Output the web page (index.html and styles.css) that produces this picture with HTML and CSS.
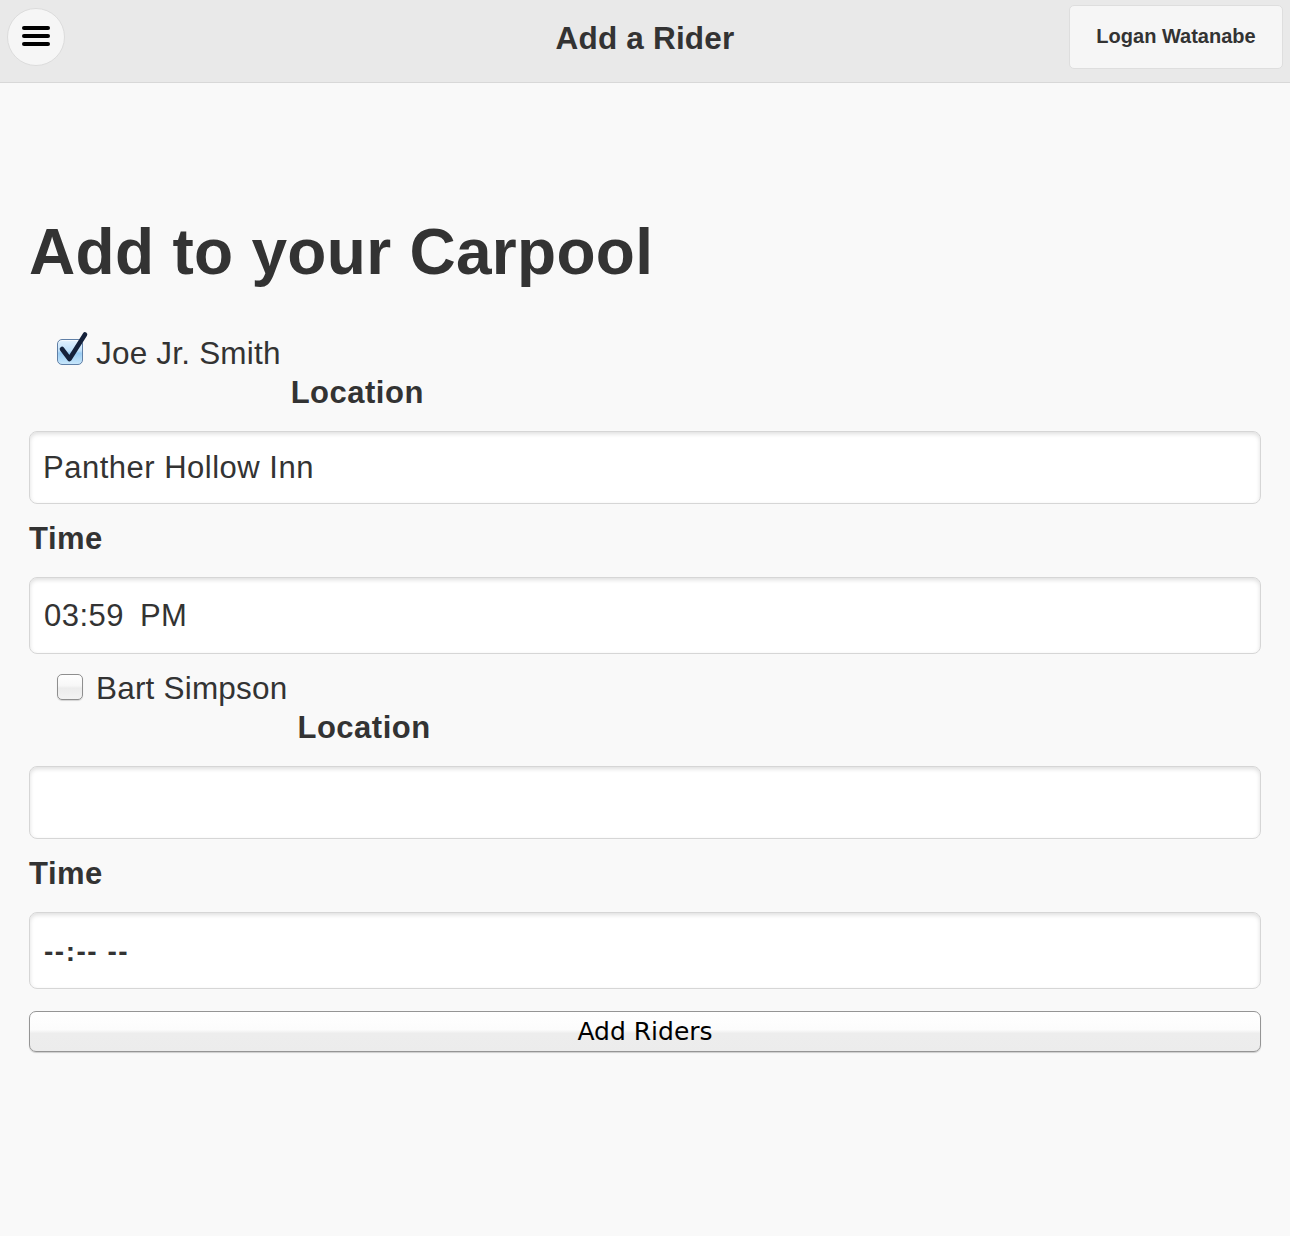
FILE: index.html
```html
<!DOCTYPE html>
<html lang="en">
<head>
<meta charset="utf-8">
<title>Add a Rider</title>
<link rel="stylesheet" href="styles.css">
</head>
<body>
<header class="topbar">
  <div class="topbar-left">
    <button class="menu-btn" type="button" aria-label="Menu">
      <svg width="28" height="20" viewBox="0 0 28 20" aria-hidden="true">
        <line x1="2" y1="2" x2="26" y2="2" stroke="#000" stroke-width="4" stroke-linecap="round"/>
        <line x1="2" y1="10" x2="26" y2="10" stroke="#000" stroke-width="4" stroke-linecap="round"/>
        <line x1="2" y1="18" x2="26" y2="18" stroke="#000" stroke-width="4" stroke-linecap="round"/>
      </svg>
    </button>
  </div>
  <h2 class="topbar-title">Add a Rider</h2>
  <div class="topbar-right">
    <button class="user-btn" type="button">Logan Watanabe</button>
  </div>
</header>

<main class="content">
  <h1 class="page-title">Add to your Carpool</h1>
  <form class="rider-form">
    <section class="rider rider-first">
      <div class="rider-head">
        <label class="rider-name">
          <span class="check-wrap">
            <input class="check check-on" type="checkbox" checked>
            <svg class="check-mark" width="34" height="34" viewBox="0 0 34 34" aria-hidden="true">
              <path d="M5 18 L12.5 28 L28 3.5" fill="none" stroke="#14213a" stroke-width="4.6" stroke-linecap="round" stroke-linejoin="round"/>
            </svg>
          </span>
          <span>Joe Jr. Smith</span>
        </label>
        <label class="field-label loc-label">Location</label>
      </div>
      <input class="field field-loc" type="text" value="Panther Hollow Inn">
      <label class="field-label time-label">Time</label>
      <input class="field field-time" type="text" value="03:59&#8201; PM">
    </section>

    <section class="rider rider-second">
      <div class="rider-head">
        <label class="rider-name">
          <span class="check-wrap">
            <input class="check check-off" type="checkbox">
          </span>
          <span>Bart Simpson</span>
        </label>
        <label class="field-label loc-label">Location</label>
      </div>
      <input class="field field-loc" type="text" value="">
      <label class="field-label time-label">Time</label>
      <input class="field field-time field-empty" type="text" placeholder="--:-- --">
    </section>

    <button class="submit-btn" type="button">Add Riders</button>
  </form>
</main>
</body>
</html>
```

FILE: styles.css
```css
* {
  box-sizing: border-box;
}

html, body {
  margin: 0;
  padding: 0;
}

body {
  background: #f9f9f9;
  color: #333;
  font-family: "Liberation Sans", Arial, Helvetica, sans-serif;
  width: 1290px;
  min-height: 1236px;
}

/* Header */
.topbar {
  height: 83px;
  background: #e9e9e9;
  border-bottom: 1px solid #d8d8d8;
  display: grid;
  grid-template-columns: 1fr auto 1fr;
  align-items: center;
}

.topbar-left {
  display: flex;
  align-items: center;
  padding-left: 7px;
  padding-top: 12px;
  padding-bottom: 8px;
}

.menu-btn {
  width: 58px;
  height: 58px;
  border-radius: 50%;
  background: #f6f6f6;
  border: 1px solid #dcdcdc;
  display: flex;
  align-items: center;
  justify-content: center;
  padding: 0;
  margin-top: -12px;
}

.menu-btn svg {
  display: block;
  margin-top: -2px;
}

.topbar-title {
  margin: 0;
  font-size: 31.5px;
  font-weight: bold;
  color: #333;
  line-height: 36px;
  margin-top: -6px;
  text-align: center;
  letter-spacing: 0.2px;
}

.topbar-right {
  display: flex;
  justify-content: flex-end;
  padding-right: 7px;
}

.user-btn {
  width: 214px;
  height: 64px;
  margin-top: -9px;
  background: #f6f6f6;
  border: 1px solid #dedede;
  border-radius: 5px;
  font-family: "Liberation Sans", Arial, sans-serif;
  font-size: 20px;
  font-weight: bold;
  color: #333;
  padding: 0;
}

/* Content */
.content {
  padding: 0 29px;
}

.page-title {
  margin: 131px 0 0;
  font-size: 64px;
  line-height: 76px;
  font-weight: bold;
  color: #333;
  letter-spacing: 0.3px;
}

.rider-form {
  display: flex;
  flex-direction: column;
}

.rider {
  display: flex;
  flex-direction: column;
}

.rider-first {
  margin-top: 45px;
}

.rider-second {
  margin-top: 16px;
}

.rider-head {
  display: grid;
  grid-template-columns: auto 1fr;
  column-gap: 10px;
  row-gap: 4px;
  padding-left: 28px;
}

.rider-name {
  grid-column: 1;
  grid-row: 1;
  display: flex;
  align-items: center;
  font-size: 31.5px;
  line-height: 36px;
  color: #333;
  letter-spacing: 0.2px;
}

.loc-label {
  grid-column: 2;
  grid-row: 2;
}

.check-wrap {
  position: relative;
  width: 26px;
  height: 26px;
  margin-right: 13px;
  margin-top: -2px;
  flex: none;
}

.check {
  appearance: none;
  -webkit-appearance: none;
  display: block;
  margin: 0;
  width: 26px;
  height: 26px;
  border-radius: 5px;
}

.check-on {
  border: 1px solid #5f7fa6;
  background: linear-gradient(#e3f1fd 0%, #bfe0fa 45%, #98cbf3 55%, #c7e6fb 100%);
  box-shadow: inset 0 1px 1px rgba(255, 255, 255, 0.8);
}

.check-off {
  border: 1px solid #8f8f8f;
  background: linear-gradient(#ffffff 0%, #f7f7f7 45%, #ececec 55%, #f3f3f3 100%);
  box-shadow: 0 1px 1px rgba(0, 0, 0, 0.15);
}

.check-mark {
  position: absolute;
  left: 0;
  top: -8px;
  pointer-events: none;
}

.field-label {
  display: block;
  font-size: 31px;
  line-height: 36px;
  font-weight: bold;
  color: #333;
  letter-spacing: 0.5px;
}

.time-label {
  margin-top: 17px;
}

.field {
  display: block;
  width: 100%;
  margin: 0;
  background: #fff;
  border: 1px solid #d6d6d6;
  border-radius: 8px;
  box-shadow: inset 0 2px 4px rgba(0, 0, 0, 0.13);
  font-family: "Liberation Sans", Arial, sans-serif;
  font-size: 31px;
  letter-spacing: 0.5px;
  color: #333;
  padding: 0 13px;
  outline: none;
}

.field-loc {
  height: 73px;
  margin-top: 20px;
}

.field-time {
  height: 77px;
  margin-top: 20px;
  padding-left: 14px;
}

.field-empty::placeholder {
  color: #333;
  font-size: 28px;
  font-weight: bold;
  letter-spacing: 1.5px;
  opacity: 1;
}

.submit-btn {
  margin-top: 22px;
  height: 41px;
  width: 100%;
  border: 1px solid #959595;
  border-radius: 7px;
  background: linear-gradient(#ffffff 0%, #fcfcfc 45%, #ededed 55%, #ececec 100%);
  box-shadow: 0 1px 1px rgba(0, 0, 0, 0.18);
  font-family: "DejaVu Sans", "Liberation Sans", sans-serif;
  font-size: 25px;
  color: #000;
  padding: 0;
  line-height: 39px;
}
```
